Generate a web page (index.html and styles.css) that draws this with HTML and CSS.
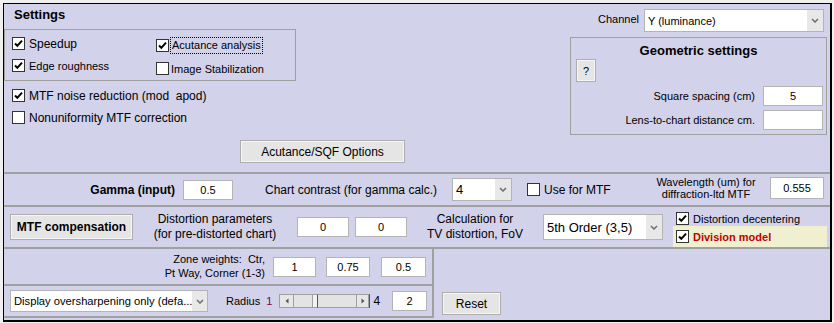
FILE: index.html
```html
<!DOCTYPE html>
<html lang="en">
<head>
  <meta charset="UTF-8">
  <title>Settings</title>
<link rel="stylesheet" href="styles.css">
</head>
<body>
  <div class="frame">

    <div class="top">
      <div class="settings">
        <div class="title">Settings</div>
        <div class="group">
          <div class="gcol gcol-a">
            <label class="cb big"><span class="box"><svg viewBox="0 0 11 11"><path d="M2 5.5 L4.3 7.8 L9 2.6"/></svg></span>Speedup</label>
            <label class="cb"><span class="box"><svg viewBox="0 0 11 11"><path d="M2 5.5 L4.3 7.8 L9 2.6"/></svg></span>Edge roughness</label>
          </div>
          <div class="gcol gcol-b">
            <label class="cb"><span class="box"><svg viewBox="0 0 11 11"><path d="M2 5.5 L4.3 7.8 L9 2.6"/></svg></span><span class="focus">Acutance analysis</span></label>
            <label class="cb"><span class="box"></span>Image Stabilization</label>
          </div>
        </div>
        <label class="cb big row-noise"><span class="box"><svg viewBox="0 0 11 11"><path d="M2 5.5 L4.3 7.8 L9 2.6"/></svg></span>MTF noise reduction (mod&nbsp; apod)</label>
        <label class="cb big row-nonu"><span class="box"></span>Nonuniformity MTF correction</label>
        <button class="btn btn-sqf">Acutance/SQF Options</button>
      </div>

      <div class="side">
        <div class="channel">
          <span class="channel-label">Channel</span>
          <div class="select sel-channel"><span>Y (luminance)</span><span class="arrow"><svg viewBox="0 0 8 5"><path d="M1 1 L4 4 L7 1"/></svg></span></div>
        </div>
        <div class="geo">
          <div class="geo-title">Geometric settings</div>
          <button class="btn btn-help">?</button>
          <div class="field field-first"><span>Square spacing (cm)</span><div class="input in-geo">5</div></div>
          <div class="field"><span>Lens-to-chart distance cm.</span><div class="input in-geo"></div></div>
        </div>
      </div>
    </div>

    <div class="row row-gamma">
      <div class="gamma-label">Gamma (input)</div>
      <div class="input in-gamma">0.5</div>
      <div class="cc-label">Chart contrast (for gamma calc.)</div>
      <div class="select sel-contrast"><span>4</span><span class="arrow"><svg viewBox="0 0 8 5"><path d="M1 1 L4 4 L7 1"/></svg></span></div>
      <label class="cb big use-mtf"><span class="box"></span>Use for MTF</label>
      <div class="wl-label">Wavelength (um) for<br>diffraction-ltd MTF</div>
      <div class="input in-wl">0.555</div>
    </div>

    <div class="row row-mtf">
      <button class="btn btn-mtf">MTF compensation</button>
      <div class="dist-label">Distortion parameters<br>(for pre-distorted chart)</div>
      <div class="input in-dist">0</div>
      <div class="input in-dist in-dist2">0</div>
      <div class="calc-label">Calculation for<br>TV distortion, FoV</div>
      <div class="select sel-order"><span>5th Order (3,5)</span><span class="arrow"><svg viewBox="0 0 8 5"><path d="M1 1 L4 4 L7 1"/></svg></span></div>
      <div class="dist-opts">
        <label class="cb decenter"><span class="box"><svg viewBox="0 0 11 11"><path d="M2 5.5 L4.3 7.8 L9 2.6"/></svg></span>Distortion decentering</label>
        <div class="division">
          <label class="cb division-cb"><span class="box"><svg viewBox="0 0 11 11"><path d="M2 5.5 L4.3 7.8 L9 2.6"/></svg></span>Division model</label>
        </div>
      </div>
    </div>

    <div class="bottom">
      <div class="bl">
        <div class="row-zone">
          <div class="zone-label">Zone weights:&nbsp; Ctr,<br>Pt Way, Corner (1-3)</div>
          <div class="input in-z1">1</div>
          <div class="input in-z2">0.75</div>
          <div class="input in-z3">0.5</div>
        </div>
        <div class="row-radius">
          <div class="select sel-display"><span>Display oversharpening only (defa...</span><span class="arrow"><svg viewBox="0 0 8 5"><path d="M1 1 L4 4 L7 1"/></svg></span></div>
          <span class="radius-label">Radius</span>
          <span class="radius-min">1</span>
          <div class="slider">
            <span class="sb-btn"><svg viewBox="0 0 4 6"><path d="M3.5 0.5 L0.5 3 L3.5 5.5 Z"/></svg></span>
            <span class="sb-track"><span class="sb-thumb"></span></span>
            <span class="sb-btn sb-right"><svg viewBox="0 0 4 6"><path d="M0.5 0.5 L3.5 3 L0.5 5.5 Z"/></svg></span>
          </div>
          <span class="radius-max">4</span>
          <div class="input in-radius">2</div>
        </div>
      </div>
      <div class="br">
        <button class="btn btn-reset">Reset</button>
      </div>
    </div>

  </div>
</body>
</html>
```

FILE: styles.css
```css
body {
  margin: 0;
  background-color: #f0f0f0;
  font-family: "Liberation Sans", Arial, sans-serif;
  font-size: 12px;
  color: #000;
}

.frame {
  margin: 3px 2px 1px 3px;
  height: 316px;
  background-color: #d2d2ea;
  border-style: solid;
  border-color: #000;
  border-width: 1px 2px 2px 1px;
}

/* common controls */

.cb {
  display: flex;
  align-items: center;
  height: 13px;
  font-size: 11px;
  white-space: nowrap;
}

.cb.big {
  font-size: 12px;
}

.box {
  box-sizing: border-box;
  width: 13px;
  height: 13px;
  margin-right: 4px;
  background: #fff;
  border: 1px solid #333;
  flex-shrink: 0;
  display: flex;
}

.box svg {
  width: 11px;
  height: 11px;
}

.box path {
  fill: none;
  stroke: #000;
  stroke-width: 2;
}

.input {
  box-sizing: border-box;
  height: 20px;
  background: #fff;
  border: 1px solid #b4b4b4;
  font-size: 11px;
  display: flex;
  align-items: center;
  justify-content: center;
  flex-shrink: 0;
}

.select {
  box-sizing: border-box;
  display: flex;
  align-items: center;
  background: #fff;
  border: 1px solid #b4b4b4;
  padding-left: 3px;
  flex-shrink: 0;
  white-space: nowrap;
}

.select span:first-child {
  flex: 1;
}

.select .arrow {
  align-self: stretch;
  width: 16px;
  background: #e8e8e8;
  display: flex;
  align-items: center;
  justify-content: center;
}

.select .arrow svg {
  width: 8px;
  height: 5px;
}

.select .arrow path {
  fill: none;
  stroke: #6d6d6d;
  stroke-width: 1.5;
}

.btn {
  box-sizing: border-box;
  background: #e5e5e5;
  border: 1px solid #adadad;
  box-shadow: inset 0 0 0 1px #f6f6f6;
  font-family: "Liberation Sans", Arial, sans-serif;
  font-size: 12px;
  color: #000;
  padding: 0;
  flex-shrink: 0;
}

/* top section */

.top {
  display: flex;
  height: 168px;
  border-bottom: 2px solid #a0a0a0;
}

.settings {
  width: 428px;
}

.title {
  font-size: 13px;
  font-weight: bold;
  line-height: 15px;
  padding: 3px 0 0 10px;
}

.group {
  box-sizing: border-box;
  display: flex;
  width: 292px;
  height: 52px;
  margin-top: 7px;
  border: 1px solid #a0a0a0;
}

.gcol-a {
  width: 144px;
  padding: 7px 0 0 7px;
}

.gcol-a .cb + .cb {
  margin-top: 9px;
}

.gcol-b {
  padding-top: 9px;
}

.gcol-b .cb + .cb {
  margin-top: 10px;
}

.gcol-b .box {
  margin-right: 2px;
}

.focus {
  outline: 1px dotted #000;
  padding: 1px 1px;
  line-height: 13px;
}

.row-noise {
  margin: 8px 0 0 8px;
}

.row-nonu {
  margin: 9px 0 0 8px;
}

.btn-sqf {
  display: block;
  width: 165px;
  height: 23px;
  margin: 16px 0 0 236px;
}

.side {
  flex: 1;
}

.channel {
  display: flex;
  justify-content: flex-end;
  align-items: flex-start;
  margin-top: 5px;
  padding-right: 6px;
}

.channel-label {
  font-size: 11px;
  line-height: 13px;
  margin: 4px 5px 0 0;
}

.sel-channel {
  width: 180px;
  height: 23px;
  font-size: 11px;
}

.geo {
  box-sizing: border-box;
  width: 257px;
  height: 98px;
  margin: 5px 3px 0 auto;
  border: 1px solid #a0a0a0;
}

.geo-title {
  font-size: 13px;
  font-weight: bold;
  line-height: 15px;
  text-align: center;
  padding-top: 5px;
}

.btn-help {
  display: block;
  width: 20px;
  height: 23px;
  margin: 1px 0 0 5px;
  font-size: 11px;
}

.field {
  display: flex;
  justify-content: flex-end;
  align-items: center;
  margin: 4px 3px 0 0;
  font-size: 11px;
}

.field span {
  margin-right: 8px;
}

.in-geo {
  width: 60px;
}

/* rows */

.row {
  display: flex;
  align-items: center;
  border-bottom: 2px solid #a0a0a0;
}

.row-gamma {
  height: 31px;
}

.gamma-label {
  width: 171px;
  text-align: right;
  font-weight: bold;
}

.in-gamma {
  width: 50px;
  margin-left: 8px;
}

.cc-label {
  width: 187px;
  margin-left: 32px;
  white-space: nowrap;
}

.sel-contrast {
  width: 60px;
  height: 23px;
  font-size: 13px;
}

.use-mtf {
  width: 124px;
  margin-left: 15px;
}

.wl-label {
  width: 110px;
  font-size: 11px;
  line-height: 12px;
  text-align: center;
  margin-top: -3px;
}

.in-wl {
  width: 54px;
  height: 22px;
  margin: -3px 0 0 9px;
}

.row-mtf {
  height: 40px;
  align-items: stretch;
}

.row-mtf > * {
  align-self: center;
}

.btn-mtf {
  width: 123px;
  height: 26px;
  margin-left: 6px;
  font-weight: bold;
}

.dist-label,
.calc-label {
  line-height: 15px;
  text-align: center;
  white-space: nowrap;
}

.dist-label {
  width: 164px;
}

.in-dist {
  width: 52px;
}

.in-dist2 {
  margin-left: 6px;
}

.calc-label {
  width: 136px;
}

.sel-order {
  width: 120px;
  height: 26px;
  font-size: 13px;
}

.row-mtf > .dist-opts {
  align-self: stretch;
  width: 154px;
  margin-left: 10px;
  padding-top: 5px;
}

.decenter {
  margin-left: 3px;
}

.division {
  height: 21px;
  margin-top: 1px;
  padding-left: 3px;
  display: flex;
  align-items: center;
  background: #f0f0d0;
}

.division-cb {
  color: #c00000;
  font-weight: bold;
}

/* bottom */

.bottom {
  display: flex;
}

.bl {
  width: 428px;
  border-right: 2px solid #a0a0a0;
  border-bottom: 2px solid #a0a0a0;
}

.row-zone {
  display: flex;
  align-items: center;
  height: 35px;
  border-bottom: 2px solid #a0a0a0;
}

.zone-label {
  width: 261px;
  text-align: right;
  font-size: 11px;
  line-height: 14px;
  margin-top: -2px;
}

.in-z1 {
  width: 43px;
  margin-left: 8px;
}

.in-z2 {
  width: 44px;
  margin-left: 10px;
}

.in-z3 {
  width: 45px;
  margin-left: 11px;
}

.row-radius {
  display: flex;
  align-items: center;
  height: 30px;
}

.sel-display {
  width: 198px;
  height: 22px;
  margin-left: 6px;
  font-size: 11.2px;
}

.radius-label {
  margin-left: 18px;
  font-size: 11px;
}

.radius-min {
  margin-left: 6px;
  font-size: 11px;
  color: #800040;
}

.slider {
  box-sizing: border-box;
  display: flex;
  width: 91px;
  height: 14px;
  margin-left: 7px;
  border-right: 1px solid #555;
}

.sb-btn {
  box-sizing: border-box;
  width: 15px;
  background: #e6e6e6;
  border: 1px solid #a0a0a0;
  display: flex;
  align-items: center;
  justify-content: center;
}

.sb-right {
  width: 13px;
}

.sb-btn svg {
  width: 4px;
  height: 6px;
}

.sb-btn path {
  fill: #555;
}

.sb-track {
  flex: 1;
  position: relative;
  background: #e3e3e3;
  border-top: 1px solid #a0a0a0;
  border-bottom: 1px solid #a0a0a0;
}

.sb-thumb {
  position: absolute;
  left: 18px;
  top: -1px;
  bottom: -1px;
  width: 6px;
  box-sizing: border-box;
  background: #f2f2f2;
  border: 1px solid #a0a0a0;
  border-right: 1px solid #555;
}

.radius-max {
  margin-left: 3px;
  font-size: 12px;
}

.in-radius {
  width: 35px;
  margin-left: 12px;
}

.br {
  flex: 1;
}

.btn-reset {
  display: block;
  width: 59px;
  height: 23px;
  margin: 43px 0 0 8px;
}
```
